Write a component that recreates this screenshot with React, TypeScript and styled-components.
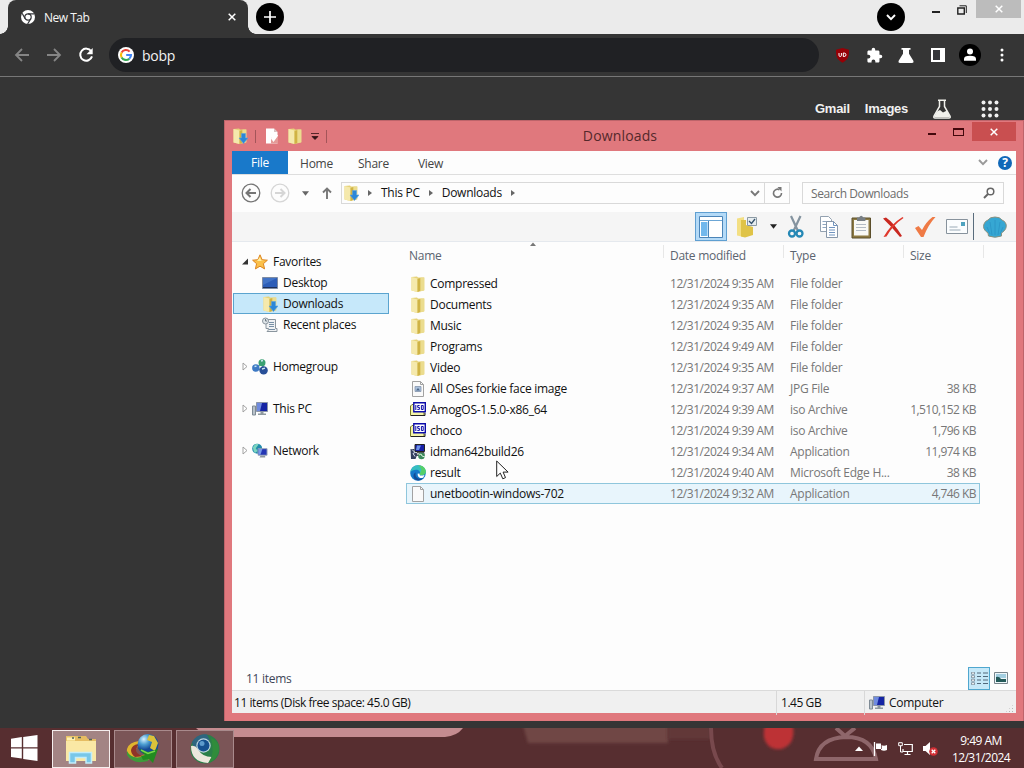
import React from "react";
import styled, { createGlobalStyle } from "styled-components";

const GlobalStyle = createGlobalStyle`
    * {
        box-sizing: border-box;
    }

    body {
        margin: 0;
        overflow: hidden;
        font-family: "Open Sans", "Noto Sans", sans-serif;
        font-size: 12px;
        letter-spacing: -0.27px;
        color: #111;
    }

    svg {
        display: block;
        flex: none;
    }
`;

type FileIconKind = "folder" | "image" | "iso" | "setup" | "edge" | "blank";

interface FileEntry {
    name: string;
    date: string;
    type: string;
    size?: string;
    icon: FileIconKind;
    hovered?: boolean;
}

const files: FileEntry[] = [
    { name: "Compressed", date: "9:35 AM", type: "File folder", icon: "folder" },
    { name: "Documents", date: "9:35 AM", type: "File folder", icon: "folder" },
    { name: "Music", date: "9:35 AM", type: "File folder", icon: "folder" },
    { name: "Programs", date: "9:49 AM", type: "File folder", icon: "folder" },
    { name: "Video", date: "9:35 AM", type: "File folder", icon: "folder" },
    { name: "All OSes forkie face image", date: "9:37 AM", type: "JPG File", size: "38 KB", icon: "image" },
    { name: "AmogOS-1.5.0-x86_64", date: "9:39 AM", type: "iso Archive", size: "1,510,152 KB", icon: "iso" },
    { name: "choco", date: "9:39 AM", type: "iso Archive", size: "1,796 KB", icon: "iso" },
    { name: "idman642build26", date: "9:34 AM", type: "Application", size: "11,974 KB", icon: "setup" },
    { name: "result", date: "9:40 AM", type: "Microsoft Edge H...", size: "38 KB", icon: "edge" },
    { name: "unetbootin-windows-702", date: "9:32 AM", type: "Application", size: "4,746 KB", icon: "blank", hovered: true },
];

/* ---------- Icons ---------- */

const ChromeIcon = () => (
    <svg width="14" height="14" viewBox="0 0 14 14">
        <circle cx="7" cy="7" r="7" fill="#fff" />
        <circle cx="7" cy="7" r="3.2" fill="none" stroke="#35363a" strokeWidth="1.2" />
        <path d="M7 3.8h6.4M4.2 8.6 1.1 3.3M9.8 8.6 6.6 14" stroke="#35363a" strokeWidth="1.2" />
    </svg>
);

const ArrowIcon = ({ flip }: { flip?: boolean }) => (
    <svg width="16" height="14" viewBox="0 0 16 14" transform={flip ? "scale(-1 1)" : undefined}>
        <path d="M15 7H2M8 1 2 7l6 6" fill="none" stroke="#858585" strokeWidth="1.8" />
    </svg>
);

const ReloadIcon = () => (
    <svg width="16" height="16" viewBox="0 0 16 16">
        <path d="M13.2 4.2A6 6 0 1 0 14 9.4" fill="none" stroke="#fff" strokeWidth="2" />
        <path d="M14.7 1v6.2H8.5z" fill="#fff" />
    </svg>
);

const GoogleIcon = () => (
    <svg width="16" height="16" viewBox="0 0 16 16">
        <circle cx="8" cy="8" r="8" fill="#fff" />
        <g fill="none" strokeWidth="2.1">
            <path d="M11.6 4.6A5 5 0 0 0 3.6 5.6" stroke="#ea4335" />
            <path d="M3.6 5.6a5 5 0 0 0 0 4.8" stroke="#fbbc05" />
            <path d="M3.6 10.4a5 5 0 0 0 7.7 1.3" stroke="#34a853" />
            <path d="M11.3 11.7A5 5 0 0 0 13 8H8.2" stroke="#4285f4" />
        </g>
    </svg>
);

const ShieldIcon = () => (
    <svg width="15" height="15" viewBox="0 0 15 15">
        <path d="M7.5 0 14 1.8c.2 6-.8 10-6.5 13C1.8 11.8.8 7.8 1 1.8z" fill="#960006" />
        <path d="M4 5v2.3q0 1.2 1.2 1.2t1.2-1.2V5m1.9 0v3.500h.8q1.900 0 1.900-1.700T9.100 5z" fill="none" stroke="#fff" />
    </svg>
);

const PuzzleIcon = () => (
    <svg width="17" height="17" viewBox="0 0 24 24" fill="#fff">
        <path d="M20.500 11H19V7c0-1.100-.9-2-2-2h-4V3.500a2.500 2.500 0 0 0-5 0V5H4c-1.100 0-2 .9-2 2v3.800h1.500a2.700 2.700 0 0 1 0 5.400H2V20c0 1.100.9 2 2 2h3.800v-1.500a2.700 2.700 0 0 1 5.400 0V22H17c1.100 0 2-.9 2-2v-4h1.500a2.500 2.500 0 0 0 0-5z" />
    </svg>
);

const FlaskIcon = () => (
    <svg width="16" height="15" viewBox="0 0 16 15">
        <path d="M3.500 0h9v1.800h-1.500v4L15.500 13q.5 2-1.500 2H2q-2 0-1.500-2L5 5.800v-4H3.500z" fill="#fff" />
    </svg>
);

const LabsIcon = () => (
    <svg width="20" height="20" viewBox="0 0 20 20">
        <path d="M6 1.200h8M7.500 1v6.500L2 17q-.8 2 1 2h14q1.800 0 1-2l-5.500-9.500V1" fill="none" stroke="#f1f1ec" strokeWidth="1.500" />
        <path d="m5 12.500 3-1.500 3 2.500 4-2L18 18H2z" fill="#f1f1ec" />
    </svg>
);

const SidePanelIcon = () => (
    <svg width="14" height="14" viewBox="0 0 14 14">
        <path d="M0 0h14v14H0z" fill="#fff" />
        <path d="M2 2h7v10H2z" fill="#35363a" />
    </svg>
);

const AvatarIcon = () => (
    <svg width="22" height="22" viewBox="0 0 22 22">
        <circle cx="11" cy="11" r="11" fill="#000" />
        <circle cx="11" cy="7.600" r="3" fill="#fff" />
        <path d="M5 16.800v-2q0-3 6-3t6 3v2z" fill="#fff" />
    </svg>
);

const DotsIcon = () => (
    <svg width="4" height="14" viewBox="0 0 4 14" fill="#fff">
        <circle cx="2" cy="2" r="1.500" />
        <circle cx="2" cy="7" r="1.500" />
        <circle cx="2" cy="12" r="1.500" />
    </svg>
);

const AppsIcon = () => (
    <svg width="18" height="18" viewBox="0 0 18 18" fill="#f1f1f1">
        {[2.5, 9, 15.5].map((y) =>
            [2.5, 9, 15.5].map((x) => <circle key={`${x}-${y}`} cx={x} cy={y} r="2" />)
        )}
    </svg>
);

const FolderIcon = ({ download }: { download?: boolean }) => (
    <svg width="16" height="16" viewBox="0 0 16 16">
        <path d="M1.500 1 7 .5l1 1h6v13L7.500 16l-6-1.500z" fill="#e6d279" />
        <path d="M1.500 1 7.500 2.500V16l-6-1.500z" fill="#f5e9ac" />
        <path d="M7.500 3 10.500 2v12.700L7.500 16z" fill="#cfb345" />
        <path d="M10.500 1.500H14.500v12.800l-4 1z" fill="#ebdc8e" />
        {download && (
            <path d="M9.500 5.500h4v4.500H16L11.500 15.500 7 10h2.500z" fill="#2b87d8" stroke="#5aa3e0" strokeWidth=".6" />
        )}
    </svg>
);

const PageIcon = ({ picture }: { picture?: boolean }) => (
    <svg width="16" height="16" viewBox="0 0 16 16">
        <path d="M2.500.500h8l3 3v12h-11z" fill="#fafafa" stroke="#a2a2a2" />
        <path d="M10.500.500v3h3" fill="none" stroke="#a2a2a2" />
        {picture && <path d="M5 5.500h6v5H5z" fill="#a9c0dc" stroke="#8595ac" strokeWidth=".8" />}
        {picture && <path d="m6 9.500 2-2.500 2 2.500z" fill="#4a6486" />}
    </svg>
);

const PropertiesIcon = () => (
    <svg width="14" height="16" viewBox="0 0 14 16">
        <path d="M1 .500h8l3.500 3.500v11.500H1z" fill="#fff" />
        <path d="M9 .500V4h3.500z" fill="#d9c2c2" />
        <path d="m6 9.500 2.500 3.500L13 7v8.500H6z" fill="#e49a97" />
        <path d="m6.500 10 2 2.500L12.500 7" fill="none" stroke="#fff" strokeWidth="1.700" />
    </svg>
);

const IsoIcon = () => (
    <svg width="16" height="16" viewBox="0 0 16 16">
        <path d="M.500 13.500V4L2 2.500h12v11z" fill="#f4f4a6" stroke="#77792a" />
        <path d="M1 13.500h14V11" fill="none" stroke="#222" />
        <path d="M3.800.800h11.500v9H3.800z" fill="#fff" stroke="#0b0ba8" strokeWidth="1.400" />
        <path d="M5.800 3v5M9.600 3.500H7.700v1.900h1.700v2H7.300M11.400 3.500h1.800v4h-1.800z" fill="none" stroke="#0b0ba8" />
    </svg>
);

const SetupIcon = () => (
    <svg width="16" height="16" viewBox="0 0 16 16">
        <path d="M5 .500h9.500v7H5z" fill="#1720a8" stroke="#222" />
        <path d="M7 1.500h4L9 6H6z" fill="#6e93e8" />
        <path d="M7 8.500h7v3H4.500z" fill="#c4c7c7" stroke="#333" strokeWidth=".8" />
        <path d="M.500 5h4v3l3 2-2 5H1z" fill="#333f5e" />
        <path d="m2 5.500 3 3-2 1 2 3" stroke="#dfe4f4" fill="none" />
        <circle cx="11.500" cy="12" r="3.300" fill="#3b8a5b" />
        <path d="m9 11 2-1 1 2 3 1" stroke="#d6f0dc" fill="none" />
    </svg>
);

const EdgeIcon = () => (
    <svg width="16" height="16" viewBox="0 0 16 16">
        <circle cx="8" cy="8" r="7.800" fill="#1478ca" />
        <path d="M.3 7.500C1 3 4 .2 8 .2s7.800 2.800 7.800 6.300c0 2.500-2 3.800-4.500 3.800-2 0-2-.8-1.500-1.500.8-1.500-.5-4-3.600-4C3.500 4.800 1.200 5.800.3 7.500z" fill="#35bfc0" />
        <path d="M8 .200c5 0 7.800 3 7.800 6.300 0 2.500-2 3.800-4.500 3.800-2 0-2-.8-1.500-1.500C11 6 13 4 8 .200z" fill="#55cf68" />
        <path d="M5.800 7.500c-1.500 4 1.700 7.500 7.500 5.800-3 3.500-9.300 2.500-9.800-1.800-.2-2 .8-3.500 2.300-4z" fill="#114a96" />
        <path d="M9.800 8.800c-1 1.500.5 2.500 4.700 1.200l-1.200 2.500c-3 1.500-6.300-.5-5.500-4z" fill="#fff" />
    </svg>
);

const fileIcons: Record<FileIconKind, React.ReactElement> = {
    folder: <FolderIcon />,
    image: <PageIcon picture />,
    iso: <IsoIcon />,
    setup: <SetupIcon />,
    edge: <EdgeIcon />,
    blank: <PageIcon />,
};

const StarIcon = () => (
    <svg width="16" height="16" viewBox="0 0 16 16">
        <path d="m8 .800 2.100 4.900 5.300.500-4 3.500 1.200 5.200L8 12.200l-4.600 2.700 1.200-5.200-4-3.500 5.300-.500z" fill="#fbc04a" stroke="#dd8521" />
        <path d="m8 3 1.200 3.500 3 .5H5z" fill="#fff0a5" />
    </svg>
);

const DesktopIcon = () => (
    <svg width="16" height="16" viewBox="0 0 16 16">
        <path d="M.500 2.500h15v11H.500z" fill="#2c5db8" stroke="#7d8ba3" />
        <path d="M1 3h14L1 10z" fill="#4273c6" />
        <path d="M1 12.500h14" stroke="#1b2e59" />
    </svg>
);

const RecentIcon = () => (
    <svg width="16" height="16" viewBox="0 0 16 16">
        <path d="M4 2.500h9.500v9H15v3H5q1.500-1 1.500-3H4z" fill="#eff1f3" stroke="#8a959e" />
        <path d="M7 5.500h5M7 7.500h5M7 9.500h5M7 12.500h6" stroke="#7890a6" />
        <circle cx="3.500" cy="4" r="3" fill="#dfe5e9" stroke="#8a959e" />
        <path d="M3.500 2v2H5" stroke="#51606b" fill="none" strokeWidth=".8" />
    </svg>
);

const HomegroupIcon = () => (
    <svg width="16" height="16" viewBox="0 0 16 16">
        <path d="m4 9 6-5 2 8z" fill="none" stroke="#6a9c95" strokeWidth="1.500" />
        <circle cx="10" cy="3.800" r="3.500" fill="#3ba172" />
        <circle cx="3.800" cy="9" r="3.700" fill="#3d79c4" />
        <circle cx="11.600" cy="11.400" r="4.200" fill="#284f98" />
        <path d="m9 2 2-.5M2.500 7.500l2-.4M10 10l3-.8" stroke="#cce8f0" strokeWidth="1.300" />
    </svg>
);

const ComputerIcon = () => (
    <svg width="16" height="16" viewBox="0 0 16 16">
        <path d="M.500 5h3v9h-3z" fill="#b9c2ca" stroke="#7f8b95" />
        <path d="M4.500 1.500h11v9h-11z" fill="#1524a4" stroke="#8c96a7" />
        <path d="M5 2h5l-2 8H5z" fill="#6f8bdf" />
        <path d="M8.500 11h3v1.500H14V14H6v-1.500h2.500z" fill="#8e999f" />
    </svg>
);

const NetworkIcon = () => (
    <svg width="16" height="16" viewBox="0 0 17 16">
        <circle cx="5.500" cy="5.500" r="5.300" fill="#238bad" />
        <path d="M1 4q3-5 6-3L4 5l2 3-3 2q-2-3-2-6z" fill="#7bd5bf" />
        <path d="M6.500 5.500h9.500v7H6.500z" fill="#2436b4" stroke="#9ca9ba" />
        <path d="M7 6h4l-2 6H7z" fill="#799be8" />
        <path d="M9 13h5v2H8z" fill="#8d979e" />
    </svg>
);

const CutIcon = () => (
    <svg width="18" height="24" viewBox="0 0 18 24">
        <path d="M4 1 11 16M13.500 1 6.500 16" stroke="#84939f" strokeWidth="2.200" />
        <circle cx="5" cy="18.500" r="3" fill="none" stroke="#2588b5" strokeWidth="2.300" />
        <circle cx="12.500" cy="18.500" r="3" fill="none" stroke="#2588b5" strokeWidth="2.300" />
    </svg>
);

const CopyIcon = () => (
    <svg width="20" height="24" viewBox="0 0 20 24">
        <path d="M1.500 1.500h8l3 3v12h-11z" fill="#fff" stroke="#93a1b0" />
        <path d="M3.500 6.500h6m-6 3h4m-4 3h4" stroke="#8fa6c0" />
        <path d="M7.500 6.500h7l4 4v12h-11z" fill="#fff" stroke="#8796a8" />
        <path d="M14.500 6.500v4h4M10 12.500h6m-6 2.500h6m-6 2.500h6m-6 2.500h6" fill="none" stroke="#7194bf" />
    </svg>
);

const PasteIcon = () => (
    <svg width="20" height="24" viewBox="0 0 20 24">
        <path d="M1 3h18.500v20H1z" fill="#8d7a42" stroke="#5b4e2b" />
        <path d="M3 5h14.500v15.500H3z" fill="#f9f9f5" />
        <path d="M5 9.500h10m-10 3h10m-10 3h10" stroke="#b3bbc4" />
        <path d="M6 2.500h2q2.200-3.500 4.400 0h2v3.500H6z" fill="#777e84" />
    </svg>
);

const DeleteIcon = () => (
    <svg width="22" height="22" viewBox="0 0 22 22">
        <path d="M1 2.500 4 1.500Q12 7 20 20l-2 1Q10 11 1 2.500z" fill="#c92820" />
        <path d="M20.500 1 21.500 2Q11 9 4.500 20.500L1.500 21Q9 8 20.500 1z" fill="#e0392d" />
    </svg>
);

const CheckIcon = () => (
    <svg width="22" height="22" viewBox="0 0 22 22">
        <path d="m1 12 3.500-2 3.500 4Q12 6 18.500 1H21.500Q14 9 9.500 21H7z" fill="#ef7a45" />
    </svg>
);

const MailIcon = () => (
    <svg width="22" height="15" viewBox="0 0 22 15">
        <path d="M.500.500h21v14H.500z" fill="#fbfdfe" stroke="#87929c" />
        <path d="M15 3h4v4h-4z" fill="#4fa3bf" />
        <path d="M3.500 8h8m-8 3h11" stroke="#9aaab6" />
    </svg>
);

const ShellIcon = () => (
    <svg width="24" height="22" viewBox="0 0 24 22">
        <path d="M5 17Q-1 13 1 8q1-3 4-4 2-3 7-3t7 3q3 1 4 4 1.500 5-4.500 9v3q-6.500 2.500-13 0z" fill="#36a7d3" stroke="#8a9180" />
        <path d="M12 19V4M9 19 7 6m8 13 2-13M7 18 4 11m13 7 3-7" stroke="#2b93c4" strokeWidth=".8" fill="none" />
    </svg>
);

const PaneIcon = () => (
    <svg width="24" height="22" viewBox="0 0 24 22">
        <path d="M.500.500h23v21H.500z" fill="#fff" stroke="#4c85b8" />
        <path d="M1 4.500h22" stroke="#6ca6d5" />
        <path d="M2 6h6.500v14H2z" fill="#72b8ec" />
        <path d="M9.500 5v16" stroke="#4c85b8" />
    </svg>
);

const OrganizeIcon = () => (
    <svg width="22" height="24" viewBox="0 0 22 24">
        <path d="M1 3.500 8 2v20l-7-1.500z" fill="#f3df83" />
        <path d="M5 5h5v5l7 2v8l-8 2.500-4-1z" fill="#dfc347" />
        <path d="M11.500 2.500h9v8h-9z" fill="#e7edf0" stroke="#8c9aa4" />
        <path d="m13 6 2.500 2.500L19 4" fill="none" stroke="#34516b" strokeWidth="1.300" />
    </svg>
);

const ChevronIcon = ({ color = "#777" }: { color?: string }) => (
    <svg width="10" height="7" viewBox="0 0 10 7">
        <path d="m1 1 4 4.200L9 1" fill="none" stroke={color} strokeWidth="1.900" />
    </svg>
);

const CrossIcon = ({ size = 8, color = "#fff" }: { size?: number; color?: string }) => (
    <svg width={size} height={size} viewBox="0 0 8 8">
        <path d="m.7.700 6.600 6.600m0-6.600L.7 7.300" stroke={color} strokeWidth="1.500" />
    </svg>
);

const RestoreIcon = () => (
    <svg width="10" height="10" viewBox="0 0 10 10">
        <path d="M.800 3h6.500v6H.800z" fill="none" stroke="#222" strokeWidth="1.400" />
        <path d="M2.500.800h6.800V8" fill="none" stroke="#222" />
    </svg>
);

const BackCircle = ({ muted }: { muted?: boolean }) => (
    <svg width="20" height="20" viewBox="0 0 20 20" fill="none" stroke={muted ? "#d6d6d6" : "#757575"}>
        <circle cx="10" cy="10" r="8.800" strokeWidth="1.300" />
        <path
            d={muted ? "M5 10h9M10.500 6l4 4-4 4" : "M15 10H6M9.500 6l-4 4 4 4"}
            strokeWidth="2"
        />
    </svg>
);

const UpIcon = () => (
    <svg width="10" height="12" viewBox="0 0 10 12">
        <path d="M5 12V2M1 5.500 5 1.500l4 4" fill="none" stroke="#777" strokeWidth="1.900" />
    </svg>
);

const Triangle = ({ right, size = 6, color = "#666" }: { right?: boolean; size?: number; color?: string }) => (
    <svg width={right ? size - 2 : size} height={right ? size : size - 2} viewBox={right ? "0 0 4 6" : "0 0 6 4"}>
        <path d={right ? "M0 0v6l4-3z" : "M0 0h6L3 4z"} fill={color} />
    </svg>
);

const RefreshIcon = () => (
    <svg width="11" height="12" viewBox="0 0 11 12">
        <path d="M7.500 2.700A4 4 0 1 0 9.500 6" fill="none" stroke="#777" strokeWidth="1.600" />
        <path d="M5.500 0h4v4.500z" fill="#777" />
    </svg>
);

const SearchIcon = () => (
    <svg width="12" height="12" viewBox="0 0 12 12">
        <circle cx="7.500" cy="4.500" r="3.300" fill="none" stroke="#666" strokeWidth="1.500" />
        <path d="m5 7-4 4" stroke="#666" strokeWidth="2" />
    </svg>
);

const ExpandIcon = ({ open }: { open?: boolean }) => (
    <svg width="6" height="9" viewBox="0 0 6 9">
        {open ? (
            <path d="M6 1.500v6H0z" fill="#333" />
        ) : (
            <path d="M1 1v7l4-3.500z" fill="#fff" stroke="#999" strokeWidth=".9" />
        )}
    </svg>
);

const DetailsIcon = () => (
    <svg width="17" height="13" viewBox="0 0 17 13">
        {[1, 4.5, 8, 11.5].map((y) => (
            <g key={y}>
                <path d={`M.500 ${y - 0.8}h3v2h-3z`} fill="#fff" stroke="#667785" strokeWidth=".7" />
                <path d={`M6 ${y}h4M12 ${y}h5`} stroke="#52697b" />
            </g>
        ))}
    </svg>
);

const ThumbsIcon = () => (
    <svg width="14" height="12" viewBox="0 0 14 12">
        <path d="M.500.500h13v11H.500z" fill="#eef7fa" stroke="#78858c" />
        <path d="M2 2h10v4H2z" fill="#a2cee0" />
        <path d="M2 5q3-1 5 2h5v3H2z" fill="#245a59" />
    </svg>
);

const WindowsIcon = () => (
    <svg width="27" height="26" viewBox="0 0 27 26" fill="#fff">
        <path d="M0 3.800 10.800 2.100v10.200H0zM12.200 1.900 26.500 0v12.300H12.200zM0 13.600h10.800v10L0 22zM12.200 13.600h14.300V26l-14.300-2.100z" />
    </svg>
);

const ExplorerIcon = () => (
    <svg width="32" height="32" viewBox="0 0 32 32">
        <path d="M1 3h11l2 3h17v22H1z" fill="#e8c568" />
        <path d="M2 4.500h9v3H2z" fill="#fff0b0" />
        <path d="M10 3h11l2 3h8v4H10z" fill="#e6bd62" />
        <path d="M1 8h30v20H1z" fill="#fae8a5" />
        <path d="M13 4.500h3M24 6.500h3M7 5h2" stroke="#52645a" strokeWidth="1.500" />
        <path d="M4.500 30V19.500h22V30H21v-5.500H10.500V30z" fill="#78c7e8" stroke="#c3edf9" strokeWidth="1.500" />
    </svg>
);

const IdmIcon = () => (
    <svg width="34" height="32" viewBox="0 0 34 32">
        <defs>
            <radialGradient id="idmGlobe" cx=".3" cy=".25">
                <stop offset="0" stopColor="#d9f2ff" />
                <stop offset=".5" stopColor="#4d9fd3" />
                <stop offset="1" stopColor="#154995" />
            </radialGradient>
        </defs>
        <path d="M13 8Q3 9 1 16q-1 5 3 9 8 6 20 1l-3-5q-9 3-11-2-1-5 5-8z" fill="#e0b52d" />
        <path d="M12 11q-6 1-7 6 0 4 4 7l11-1q-8 0-10-5 0-4 4-7z" fill="#8f3428" />
        <path d="M1 18q4 8 14 6l8 1-1 3Q7 32 1 22z" fill="#3c9b3a" />
        <circle cx="22" cy="11.500" r="10.500" fill="url(#idmGlobe)" />
        <path d="m23 2 5 1 4 7-3 8-5-3 2-6-5-2z" fill="#dcc23a" />
        <path d="m13 16 9 3 10-3-5 14-4-4-6 1-2-4 4-1z" fill="#218b20" />
        <path d="m15 17 7 3.500 7-2.500" fill="none" stroke="#76d84c" strokeWidth="1.500" />
    </svg>
);

const CentIcon = () => (
    <svg width="32" height="30" viewBox="0 0 32 30">
        <circle cx="16" cy="15" r="14.500" fill="#2a7f49" />
        <path d="M3 8Q9-1 18 .5l3 6L5 15z" fill="#2e6580" />
        <path d="M2 12q0 16 17 17l4-6q-10 0-14-8-3-4-7-3z" fill="#ebe8dc" />
        <path d="M22 4q9 3 8 13-3 10-10 11 6-9 2-24z" fill="#308c3b" />
        <circle cx="14.500" cy="11.500" r="7.200" fill="#bdd5df" />
        <circle cx="14.500" cy="11.500" r="6" fill="#16508f" />
        <circle cx="13" cy="9.500" r="2.500" fill="#5e9bcc" />
    </svg>
);

const CursorIcon = () => (
    <svg width="13" height="20" viewBox="0 0 13 20">
        <path d="M.7 1v15.500l3.600-3.400 2.500 5.700 2.700-1.200-2.400-5.500h5z" fill="#fff" stroke="#222" />
    </svg>
);

const FlagIcon = () => (
    <svg width="15" height="14" viewBox="0 0 15 14">
        <path d="M1.500 0v14" stroke="#fff" strokeWidth="1.300" />
        <path d="M3 1.500h5V3q3 1.500 6 0v5q-3 1.500-6 0V7H3z" fill="#fff" />
        <path d="M8.500 3v4" stroke="#8f6e70" fill="none" />
    </svg>
);

const TrayNetworkIcon = () => (
    <svg width="15" height="13" viewBox="0 0 15 13" fill="none" stroke="#fff">
        <path d="M6 2.500h8.300v7H5V7M9.500 9.500v3M6.500 12.500h6" strokeWidth="1.200" />
        <path d="M.7.700h3.600v3H.7zM2.500 4v6H5" />
    </svg>
);

const VolumeIcon = () => (
    <svg width="15" height="14" viewBox="0 0 15 14">
        <path d="M0 4h2.500L7 0v13L2.500 9H0z" fill="#fff" />
        <circle cx="10.500" cy="9.500" r="4.300" fill="#d22f34" />
        <path d="m8.700 7.700 3.600 3.600m0-3.600-3.600 3.600" stroke="#fff" strokeWidth="1.300" />
    </svg>
);

const TaskbarBackdrop = () => (
    <svg width="1024" height="40" viewBox="0 0 1024 40">
        <defs>
            <filter id="soft" x="-20%" y="-50%" width="140%" height="200%">
                <feGaussianBlur stdDeviation="1.800" />
            </filter>
        </defs>
        <path d="M0 0h1024v40H0z" fill="#572e30" />
        <path d="M196 0h267q-6 8-18 9H206z" fill="#c58c90" />
        <path d="M522-6h146v21H528z" fill="#6f4644" filter="url(#soft)" />
        <path d="M668-6h42v17h-42z" fill="#623838" filter="url(#soft)" />
        <path d="M711 0q0 25 11 40" fill="none" stroke="#78494d" strokeWidth="4" />
        <path d="M766-6h26q5 20-8 26-7 3-14-1-10-8-4-25z" fill="#bd3236" filter="url(#soft)" />
        <path d="M816 31q3-21 30-22 26 0 30 22zM836 0l9 8 10-8" fill="none" stroke="#8e666a" strokeWidth="4" />
    </svg>
);

/* ---------- Browser ---------- */

const Browser = () => (
    <BrowserWindow>
        <TabStrip>
            <BrowserTab>
                <ChromeIcon />
                <TabTitle>New Tab</TabTitle>
                <CrossIcon />
            </BrowserTab>
            <RoundButton>
                <svg width="12" height="12" viewBox="0 0 12 12">
                    <path d="M6 0v12M0 6h12" stroke="#fff" strokeWidth="1.700" />
                </svg>
            </RoundButton>
            <TabSpacer />
            <RoundButton>
                <ChevronIcon color="#fff" />
            </RoundButton>
            <BrowserControls>
                <MinimizeBar $color="#222" />
                <RestoreIcon />
                <BrowserClose>
                    <CrossIcon />
                </BrowserClose>
            </BrowserControls>
        </TabStrip>
        <BrowserToolbar>
            <NavButtons>
                <ArrowIcon />
                <ArrowIcon flip />
                <ReloadIcon />
            </NavButtons>
            <Omnibox>
                <GoogleIcon />
                <span>bobp</span>
            </Omnibox>
            <Extensions>
                <ShieldIcon />
                <PuzzleIcon />
                <FlaskIcon />
                <SidePanelIcon />
                <AvatarIcon />
                <DotsIcon />
            </Extensions>
        </BrowserToolbar>
        <PageLinks>
            <PageLink>Gmail</PageLink>
            <PageLink>Images</PageLink>
            <LabsIcon />
            <AppsIcon />
        </PageLinks>
    </BrowserWindow>
);

const BrowserWindow = styled.div`
    display: flex;
    flex-direction: column;
    height: 728px;
    background-color: #353535;
`;

const TabStrip = styled.div`
    display: flex;
    height: 34px;
    padding-left: 8px;
    background-color: #ebebeb;
`;

const BrowserTab = styled.div`
    display: flex;
    align-items: center;
    width: 240px;
    padding: 0 12px 0 13px;
    border-radius: 8px 8px 0 0;
    background:
        radial-gradient(circle at 0 0, transparent 8px, #353535 8.5px) 0 0 / 0 0 no-repeat,
        #353535;
    color: #f5f5f5;

    &::before,
    &::after {
        content: "";
        align-self: flex-end;
        flex: none;
        width: 8px;
        height: 8px;
    }

    &::before {
        margin: 0 13px 0 -21px;
        background: radial-gradient(circle at 0 0, transparent 7.5px, #353535 8px);
    }

    &::after {
        margin: 0 -20px 0 12px;
        background: radial-gradient(circle at 100% 0, transparent 7.5px, #353535 8px);
    }
`;

const TabTitle = styled.span`
    flex: 1;
    margin-left: 9px;
    letter-spacing: -0.5px;
`;

const RoundButton = styled.div`
    display: flex;
    justify-content: center;
    align-items: center;
    width: 28px;
    height: 28px;
    margin: 3px 0 0 8px;
    border-radius: 50%;
    background-color: #000;
`;

const TabSpacer = styled.div`
    flex: 1;
`;

const BrowserControls = styled.div`
    display: flex;
    align-items: flex-start;
    width: 119px;
    padding-left: 27px;

    svg {
        margin-top: 5px;
    }
`;

const MinimizeBar = styled.div<{ $color: string }>`
    width: 8px;
    height: 2px;
    margin: 11px 17px 0 0;
    background-color: ${({ $color }) => $color};
`;

const BrowserClose = styled.div`
    display: flex;
    justify-content: center;
    width: 45px;
    height: 18px;
    margin-left: 9px;
    background-color: #bcbcbc;
`;

const BrowserToolbar = styled.div`
    display: flex;
    align-items: center;
    height: 43px;
    border-bottom: 1px solid #777;
`;

const NavButtons = styled.div`
    display: flex;
    align-items: center;
    gap: 16px;
    width: 109px;
    padding-left: 14px;
`;

const Omnibox = styled.div`
    display: flex;
    align-items: center;
    gap: 8px;
    width: 710px;
    height: 34px;
    padding-left: 9px;
    border-radius: 17px;
    background-color: #202124;
    color: #f3f3f3;
    font-size: 14px;
    letter-spacing: -0.3px;
`;

const Extensions = styled.div`
    display: grid;
    grid-template-columns: repeat(6, 32px);
    place-items: center;
    padding-left: 7px;
`;

const PageLinks = styled.div`
    display: flex;
    justify-content: flex-end;
    align-items: center;
    height: 63px;
    padding-right: 25px;
    color: #f1f1f1;
    font-family: "Liberation Sans", Arial, sans-serif;
    font-size: 13px;
    font-weight: bold;

    svg:first-of-type {
        margin: 0 29px 0 9px;
    }
`;

const PageLink = styled.span`
    margin-right: 15px;
`;

/* ---------- Explorer ---------- */

const Explorer = () => (
    <ExplorerWindow>
        <TitleBar>
            <QuickAccess>
                <FolderIcon download />
                <QuickDivider />
                <PropertiesIcon />
                <FolderIcon />
                <svg width="8" height="8" viewBox="0 0 8 8">
                    <path d="M0 1.500h8M1 4.500h6L4 7.500z" fill="#331114" stroke="#331114" strokeWidth=".8" />
                </svg>
                <QuickDivider />
            </QuickAccess>
            <WindowTitle>Downloads</WindowTitle>
            <WindowControls>
                <MinimizeBar $color="#43080c" />
                <MaximizeBox />
                <CloseButton>
                    <CrossIcon />
                </CloseButton>
            </WindowControls>
        </TitleBar>
        <Client>
            <RibbonTabs>
                <FileTab>File</FileTab>
                <RibbonTab>Home</RibbonTab>
                <RibbonTab>Share</RibbonTab>
                <RibbonTab>View</RibbonTab>
                <RibbonEnd>
                    <ChevronIcon color="#999" />
                    <HelpBadge>?</HelpBadge>
                </RibbonEnd>
            </RibbonTabs>
            <AddressRow>
                <BackCircle />
                <BackCircle muted />
                <Triangle size={7} />
                <UpIcon />
                <AddressBar>
                    <FolderIcon download />
                    <Triangle right />
                    <span>This PC</span>
                    <Triangle right />
                    <span>Downloads</span>
                    <Triangle right />
                    <AddressEnd>
                        <ChevronIcon />
                        <RefreshBox>
                            <RefreshIcon />
                        </RefreshBox>
                    </AddressEnd>
                </AddressBar>
                <SearchBox>
                    <span>Search Downloads</span>
                    <SearchIcon />
                </SearchBox>
            </AddressRow>
            <CommandBar>
                <ActiveCommand>
                    <PaneIcon />
                </ActiveCommand>
                <Command $width={40}>
                    <OrganizeIcon />
                </Command>
                <Command $width={12}>
                    <Triangle size={7} color="#222" />
                </Command>
                <Command $width={34}>
                    <CutIcon />
                </Command>
                <Command>
                    <CopyIcon />
                </Command>
                <Command>
                    <PasteIcon />
                </Command>
                <Command>
                    <DeleteIcon />
                </Command>
                <Command>
                    <CheckIcon />
                </Command>
                <Command>
                    <MailIcon />
                </Command>
                <CommandDivider />
                <Command $width={42}>
                    <ShellIcon />
                </Command>
            </CommandBar>
            <Body>
                <NavPane>
                    <NavGroup>
                        <ExpandIcon open />
                        <StarIcon />
                        Favorites
                    </NavGroup>
                    <NavItem>
                        <DesktopIcon />
                        Desktop
                    </NavItem>
                    <NavItem $selected>
                        <FolderIcon download />
                        Downloads
                    </NavItem>
                    <NavItem>
                        <RecentIcon />
                        Recent places
                    </NavItem>
                    <NavGroup $spaced>
                        <ExpandIcon />
                        <HomegroupIcon />
                        Homegroup
                    </NavGroup>
                    <NavGroup $spaced>
                        <ExpandIcon />
                        <ComputerIcon />
                        This PC
                    </NavGroup>
                    <NavGroup $spaced>
                        <ExpandIcon />
                        <NetworkIcon />
                        Network
                    </NavGroup>
                </NavPane>
                <FileList>
                    <SortMark>
                        <svg width="6" height="4" viewBox="0 0 6 4">
                            <path d="m0 4 3-3.500L6 4z" fill="#777" />
                        </svg>
                    </SortMark>
                    <ListHeader>
                        <HeaderCell>Name</HeaderCell>
                        <HeaderCell>Date modified</HeaderCell>
                        <HeaderCell>Type</HeaderCell>
                        <HeaderCell>Size</HeaderCell>
                    </ListHeader>
                    {files.map((file) => (
                        <FileRow key={file.name} $hovered={file.hovered}>
                            <NameCell>
                                {fileIcons[file.icon]}
                                {file.name}
                            </NameCell>
                            <DateCell>12/31/2024 {file.date}</DateCell>
                            <Cell>{file.type}</Cell>
                            <SizeCell>{file.size}</SizeCell>
                        </FileRow>
                    ))}
                </FileList>
            </Body>
            <ItemBar>
                <span>11 items</span>
                <ViewModes>
                    <ActiveView>
                        <DetailsIcon />
                    </ActiveView>
                    <ThumbsIcon />
                </ViewModes>
            </ItemBar>
            <StatusBar>
                <StatusText>11 items (Disk free space: 45.0 GB)</StatusText>
                <StatusSize>1.45 GB</StatusSize>
                <StatusZone>
                    <ComputerIcon />
                    <span>Computer</span>
                    <ResizeGrip />
                </StatusZone>
            </StatusBar>
        </Client>
    </ExplorerWindow>
);

const ExplorerWindow = styled.div`
    position: absolute;
    left: 224px;
    top: 120px;
    width: 800px;
    height: 601px;
    padding: 1px 7px 7px;
    border: 1px solid #bd646a;
    border-bottom: none;
    background-color: #e0787d;
`;

const TitleBar = styled.div`
    display: grid;
    grid-template-columns: 336px 1fr 344px;
    height: 29px;
`;

const QuickAccess = styled.div`
    display: flex;
    align-items: center;
    gap: 8px;
    padding-bottom: 1px;
`;

const QuickDivider = styled.div`
    width: 1px;
    height: 13px;
    margin: 0 1px 0 -1px;
    background-color: #a45559;
`;

const WindowTitle = styled.div`
    padding-top: 3px;
    text-align: center;
    line-height: 22px;
    font-size: 14px;
    letter-spacing: 0.15px;
    color: #54282b;
    white-space: nowrap;
`;

const WindowControls = styled.div`
    display: flex;
    justify-content: flex-end;
    align-items: flex-start;
`;

const MaximizeBox = styled.div`
    width: 11px;
    height: 8px;
    margin: 6px 8px 0 0;
    border: 2px solid #43080c;
    border-width: 2px 1px 1px;
`;

const CloseButton = styled.div`
    display: flex;
    justify-content: center;
    align-items: center;
    width: 44px;
    height: 19px;
    background-color: #c94f50;
`;

const Client = styled.div`
    display: flex;
    flex-direction: column;
    height: 562px;
    background-color: #fdfdfd;
`;

const RibbonTabs = styled.div`
    display: flex;
    height: 24px;
    border-bottom: 1px solid #dedede;
    line-height: 24px;
`;

const FileTab = styled.div`
    width: 56px;
    background-color: #1979ca;
    color: #fff;
    text-align: center;
`;

const RibbonTab = styled.div`
    width: 57px;
    padding-top: 1px;
    text-align: center;
    color: #444;
`;

const RibbonEnd = styled.div`
    display: flex;
    flex: 1;
    justify-content: flex-end;
    align-items: center;
    gap: 10px;
    padding-right: 4px;
`;

const HelpBadge = styled.div`
    width: 14px;
    height: 14px;
    border-radius: 50%;
    background-color: #1168b8;
    color: #fff;
    font-weight: bold;
    line-height: 14px;
    text-align: center;
`;

const AddressRow = styled.div`
    display: flex;
    align-items: center;
    height: 36px;
    margin-bottom: 1px;
    padding: 0 12px 0 9px;

    > svg {
        margin-right: 9px;
    }

    > svg:nth-child(2) {
        margin-right: 12px;
    }

    > svg:nth-child(3) {
        margin-right: 13px;
    }
`;

const AddressBar = styled.div`
    display: flex;
    align-items: center;
    gap: 9px;
    width: 449px;
    height: 22px;
    padding-left: 1px;
    border: 1px solid #d9d9d9;
    line-height: 20px;
`;

const AddressEnd = styled.div`
    display: flex;
    flex: 1;
    justify-content: flex-end;
    align-items: center;
    gap: 4px;
`;

const RefreshBox = styled.div`
    display: flex;
    justify-content: center;
    align-items: center;
    width: 25px;
    height: 20px;
    border-left: 1px solid #d9d9d9;
`;

const SearchBox = styled.div`
    display: flex;
    justify-content: space-between;
    align-items: center;
    width: 202px;
    height: 22px;
    margin-left: auto;
    padding: 0 8px;
    border: 1px solid #d9d9d9;
    color: #6d6d6d;
    letter-spacing: -0.4px;
`;

const CommandBar = styled.div`
    display: flex;
    align-items: center;
    height: 30px;
    padding-left: 463px;
    border-bottom: 1px solid #e5e9ee;
    background-color: #f5f5f5;
`;

const ActiveCommand = styled.div`
    display: flex;
    flex: none;
    justify-content: center;
    align-items: center;
    width: 32px;
    height: 29px;
    border: 1px solid #5f9fd1;
    background-color: #b4daf7;
`;

const Command = styled.div<{ $width?: number }>`
    display: flex;
    flex: none;
    justify-content: center;
    align-items: center;
    width: ${({ $width = 32 }) => $width}px;
`;

const CommandDivider = styled.div`
    width: 1px;
    height: 27px;
    background-color: #596c7c;
`;

const Body = styled.div`
    display: flex;
    flex: 1;
`;

const NavPane = styled.div`
    width: 174px;
    padding: 9px 17px 0 1px;
`;

const NavGroup = styled.div<{ $spaced?: boolean }>`
    display: flex;
    align-items: center;
    gap: 5px;
    height: 21px;
    margin-top: ${({ $spaced }) => ($spaced ? 21 : 0)}px;
    padding-left: 9px;

    svg:first-child {
        margin-right: -1px;
    }
`;

const NavItem = styled.div<{ $selected?: boolean }>`
    display: flex;
    align-items: center;
    gap: 5px;
    height: 21px;
    padding-left: 28px;
    border: 1px solid ${({ $selected }) => ($selected ? "#5ba4cf" : "transparent")};
    background-color: ${({ $selected }) => ($selected ? "#c6e8fa" : "transparent")};
`;

const FileList = styled.div`
    width: 580px;
`;

const SortMark = styled.div`
    height: 3px;
    padding-left: 124px;
`;

const ListHeader = styled.div`
    display: grid;
    grid-template-columns: 258px 120px 120px 80px;
    height: 28px;
    color: #5b6470;
`;

const HeaderCell = styled.div`
    height: 13px;
    padding-left: 6px;
    border-right: 1px solid #e7e7e7;
    line-height: 21px;

    &:first-child {
        padding-left: 3px;
    }
`;

const FileRow = styled.div<{ $hovered?: boolean }>`
    display: grid;
    grid-template-columns: 263px 120px 108px 1fr;
    align-items: center;
    width: 574px;
    height: 21px;
    border: 1px solid ${({ $hovered }) => ($hovered ? "#8fc6dc" : "transparent")};
    background-color: ${({ $hovered }) => ($hovered ? "#e8f5fc" : "transparent")};
`;

const Cell = styled.div`
    color: #777;
    white-space: nowrap;
`;

const NameCell = styled.div`
    display: flex;
    align-items: center;
    gap: 4px;
    padding-left: 3px;
`;

const DateCell = styled(Cell)`
    letter-spacing: -0.45px;
`;

const SizeCell = styled(Cell)`
    padding-right: 3px;
    text-align: right;
    letter-spacing: -0.55px;
`;

const ItemBar = styled.div`
    display: flex;
    justify-content: space-between;
    align-items: center;
    height: 24px;
    padding: 0 8px 0 14px;
    color: #3d4657;
`;

const ViewModes = styled.div`
    display: flex;
    align-items: center;
    gap: 4px;
`;

const ActiveView = styled.div`
    display: flex;
    justify-content: center;
    align-items: center;
    width: 22px;
    height: 23px;
    border: 1px solid #4fa7cf;
    background-color: #c6e8f8;
`;

const StatusBar = styled.div`
    display: grid;
    grid-template-columns: 545px 88px 1fr;
    height: 23px;
    border-top: 1px solid #dadada;
    background-color: #f0f0f0;
    line-height: 24px;
`;

const StatusText = styled.div`
    padding-left: 2px;
    border-right: 1px solid #d8d8d8;
    letter-spacing: -0.45px;
`;

const StatusSize = styled.div`
    padding-left: 4px;
    border-right: 1px solid #d8d8d8;
    letter-spacing: -0.45px;
`;

const StatusZone = styled.div`
    display: flex;
    align-items: center;
    gap: 4px;
    padding-left: 4px;
`;

const ResizeGrip = styled.div`
    align-self: flex-end;
    width: 9px;
    height: 9px;
    margin: 0 2px 2px auto;
    background: radial-gradient(circle, #b5b5b5 1px, transparent 1px) 0 0 / 3px 3px;
    clip-path: polygon(100% 0, 100% 100%, 0 100%);
`;

/* ---------- Taskbar ---------- */

const Taskbar = () => (
    <TaskbarRoot>
        <Backdrop>
            <TaskbarBackdrop />
        </Backdrop>
        <StartButton>
            <WindowsIcon />
        </StartButton>
        <TaskButton $active>
            <ExplorerIcon />
        </TaskButton>
        <TaskButton>
            <IdmIcon />
        </TaskButton>
        <TaskButton>
            <CentIcon />
        </TaskButton>
        <Tray>
            <svg width="8" height="5" viewBox="0 0 8 5">
                <path d="m0 5 4-4.500L8 5z" fill="#fff" />
            </svg>
            <FlagIcon />
            <TrayNetworkIcon />
            <VolumeIcon />
        </Tray>
        <Clock>
            <span>9:49 AM</span>
            <span>12/31/2024</span>
        </Clock>
    </TaskbarRoot>
);

const TaskbarRoot = styled.div`
    position: relative;
    display: flex;
    align-items: center;
    height: 40px;
    color: #fff;
    overflow: hidden;
`;

const Backdrop = styled.div`
    position: absolute;
    inset: 0;
    z-index: -1;
`;

const StartButton = styled.div`
    display: flex;
    width: 52px;
    padding-left: 11px;
`;

const TaskButton = styled.div<{ $active?: boolean }>`
    display: flex;
    justify-content: center;
    align-items: center;
    width: 58px;
    height: 38px;
    margin: 1px 4px 0 0;
    border: 1px solid ${({ $active }) => ($active ? "#f5eeee" : "#a98a8c")};
    background-color: ${({ $active }) => ($active ? "#a38484" : "#7b5557")};
`;

const Tray = styled.div`
    display: flex;
    align-items: center;
    gap: 10px;
    margin-left: auto;
    padding-top: 1px;
`;

const Clock = styled.div`
    display: flex;
    flex-direction: column;
    align-items: center;
    width: 86px;
    padding-top: 2px;
    line-height: 17px;
    letter-spacing: -0.55px;
`;

const Desktop = styled.div`
    position: relative;
    z-index: 0;
    width: 1024px;
    height: 768px;
    overflow: hidden;
`;

const Pointer = styled.div`
    position: absolute;
    left: 496px;
    top: 460px;
`;

const App: React.FC = () => {
    return (
        <Desktop>
            <GlobalStyle />
            <Browser />
            <Taskbar />
            <Explorer />
            <Pointer>
                <CursorIcon />
            </Pointer>
        </Desktop>
    );
};

export default App;
